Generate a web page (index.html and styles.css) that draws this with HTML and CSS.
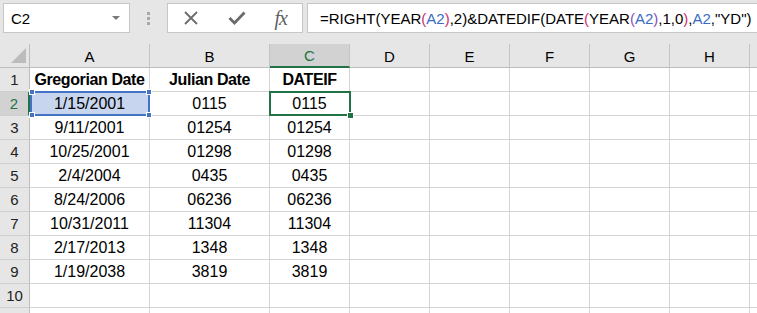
FILE: index.html
```html
<!DOCTYPE html>
<html lang="en">
<head>
  <meta charset="UTF-8">
  <title>Julian Date</title>
  <link rel="stylesheet" href="styles.css">
</head>
<body>
  <div class="window">
    <!-- Name box and formula bar -->
    <div class="formula-row">
      <div class="name-box">
        <span>C2</span>
        <span class="drop"></span>
      </div>
      <div class="grip"><i></i><i></i><i></i></div>
      <div class="fx-buttons">
        <svg class="icon" width="16" height="14" viewBox="0 0 16 14">
          <path d="M2 1 L14 13 M14 1 L2 13" stroke="#6b6b6b" stroke-width="1.8" fill="none"/>
        </svg>
        <svg class="icon" width="18" height="14" viewBox="0 0 18 14">
          <path d="M1.5 7 L6.5 12 L16.5 1.5" stroke="#6b6b6b" stroke-width="2.8" fill="none"/>
        </svg>
        <span class="fx">fx</span>
      </div>
      <div class="formula">=RIGHT(YEAR<span class="p1">(</span><span class="ref">A2</span><span class="p1">)</span>,2)&amp;DATEDIF(DATE<span class="p1">(</span>YEAR<span class="p2">(</span><span class="ref">A2</span><span class="p2">)</span>,1,0<span class="p1">)</span>,<span class="ref">A2</span>,"YD")</div>
    </div>

    <!-- Sheet grid -->
    <div class="sheet">
      <div class="corner"><span class="tri"></span></div>
      <div class="col-head">A</div>
      <div class="col-head">B</div>
      <div class="col-head active">C</div>
      <div class="col-head">D</div>
      <div class="col-head">E</div>
      <div class="col-head">F</div>
      <div class="col-head">G</div>
      <div class="col-head">H</div>
      <div class="col-head"></div>

      <div class="row-head">1</div>
      <div class="cell bold">Gregorian Date</div>
      <div class="cell bold">Julian Date</div>
      <div class="cell bold">DATEIF</div>
      <div class="cell"></div><div class="cell"></div><div class="cell"></div><div class="cell"></div><div class="cell"></div><div class="cell"></div>

      <div class="row-head active">2</div>
      <div class="cell ref-range">1/15/2001<i class="h tl"></i><i class="h tr"></i><i class="h bl"></i><i class="h br"></i></div>
      <div class="cell">0115</div>
      <div class="cell selected">0115<i class="fill-handle"></i></div>
      <div class="cell"></div><div class="cell"></div><div class="cell"></div><div class="cell"></div><div class="cell"></div><div class="cell"></div>

      <div class="row-head">3</div>
      <div class="cell">9/11/2001</div>
      <div class="cell">01254</div>
      <div class="cell">01254</div>
      <div class="cell"></div><div class="cell"></div><div class="cell"></div><div class="cell"></div><div class="cell"></div><div class="cell"></div>

      <div class="row-head">4</div>
      <div class="cell">10/25/2001</div>
      <div class="cell">01298</div>
      <div class="cell">01298</div>
      <div class="cell"></div><div class="cell"></div><div class="cell"></div><div class="cell"></div><div class="cell"></div><div class="cell"></div>

      <div class="row-head">5</div>
      <div class="cell">2/4/2004</div>
      <div class="cell">0435</div>
      <div class="cell">0435</div>
      <div class="cell"></div><div class="cell"></div><div class="cell"></div><div class="cell"></div><div class="cell"></div><div class="cell"></div>

      <div class="row-head">6</div>
      <div class="cell">8/24/2006</div>
      <div class="cell">06236</div>
      <div class="cell">06236</div>
      <div class="cell"></div><div class="cell"></div><div class="cell"></div><div class="cell"></div><div class="cell"></div><div class="cell"></div>

      <div class="row-head">7</div>
      <div class="cell">10/31/2011</div>
      <div class="cell">11304</div>
      <div class="cell">11304</div>
      <div class="cell"></div><div class="cell"></div><div class="cell"></div><div class="cell"></div><div class="cell"></div><div class="cell"></div>

      <div class="row-head">8</div>
      <div class="cell">2/17/2013</div>
      <div class="cell">1348</div>
      <div class="cell">1348</div>
      <div class="cell"></div><div class="cell"></div><div class="cell"></div><div class="cell"></div><div class="cell"></div><div class="cell"></div>

      <div class="row-head">9</div>
      <div class="cell">1/19/2038</div>
      <div class="cell">3819</div>
      <div class="cell">3819</div>
      <div class="cell"></div><div class="cell"></div><div class="cell"></div><div class="cell"></div><div class="cell"></div><div class="cell"></div>

      <div class="row-head">10</div>
      <div class="cell"></div><div class="cell"></div><div class="cell"></div>
      <div class="cell"></div><div class="cell"></div><div class="cell"></div><div class="cell"></div><div class="cell"></div><div class="cell"></div>

      <div class="row-head"></div>
      <div class="cell"></div><div class="cell"></div><div class="cell"></div>
      <div class="cell"></div><div class="cell"></div><div class="cell"></div><div class="cell"></div><div class="cell"></div><div class="cell"></div>
    </div>
  </div>
</body>
</html>
```

FILE: styles.css
```css
body {
  margin: 0;
  padding: 0;
  font-family: "Liberation Sans", Arial, sans-serif;
  background-color: #e6e6e6;
  color: #000;
}

.window {
  width: 757px;
  height: 313px;
  overflow: hidden;
}

/* formula bar */
.formula-row {
  display: flex;
  align-items: center;
  height: 44px;
  padding: 0 0 8px 3px;
  box-sizing: border-box;
}

.name-box,
.fx-buttons,
.formula {
  height: 30px;
  box-sizing: border-box;
  background-color: #fff;
  border: 1px solid #c6c6c6;
  display: flex;
  align-items: center;
}

.name-box {
  width: 127px;
  padding: 0 7px;
  font-size: 15px;
  justify-content: space-between;
}

.drop {
  width: 0;
  height: 0;
  border-left: 4px solid transparent;
  border-right: 4px solid transparent;
  border-top: 4px solid #7a7a7a;
  margin-right: 2px;
}

.grip {
  width: 37px;
  display: flex;
  flex-direction: column;
  align-items: center;
  gap: 2px;
}

.grip i {
  width: 3px;
  height: 3px;
  background-color: #a8a8a8;
}

.fx-buttons {
  width: 136px;
  padding: 0 15px 0 15px;
  justify-content: space-between;
}

.fx {
  font-family: "Liberation Serif", "Times New Roman", serif;
  font-style: italic;
  font-size: 20px;
  color: #5f5f5f;
  letter-spacing: -1px;
}

.formula {
  margin-left: 4px;
  flex: 1;
  padding-left: 12px;
  font-size: 15px;
  white-space: nowrap;
  border-right: none;
}

.ref { color: #3a6cc6; }
.p1 { color: #d0306a; }
.p2 { color: #8a4fc1; }

/* sheet grid */
.sheet {
  display: grid;
  grid-template-columns: 30px 120px 120px 80px 80px 80px 80px 80px 80px 80px;
  grid-auto-rows: 24px;
  background-color: #fff;
}

.corner,
.col-head,
.row-head,
.cell {
  box-sizing: border-box;
  display: flex;
  align-items: center;
  justify-content: center;
  position: relative;
}

.corner {
  background-color: #e6e6e6;
  border-right: 1px solid #bdbdbd;
  border-bottom: 1px solid #bdbdbd;
}

.tri {
  position: absolute;
  right: 3px;
  bottom: 4px;
  width: 0;
  height: 0;
  border-left: 15px solid transparent;
  border-bottom: 15px solid #bcbcbc;
}

.col-head {
  background-color: #e6e6e6;
  border-right: 1px solid #c4c4c4;
  border-bottom: 1px solid #bdbdbd;
  font-size: 15px;
  padding-top: 1px;
}

.col-head.active {
  background-color: #d2d2d2;
  color: #217346;
  border-bottom: 2px solid #217346;
}

.row-head {
  background-color: #e6e6e6;
  border-right: 1px solid #bdbdbd;
  border-bottom: 1px solid #cfcfcf;
  font-size: 15px;
  color: #222;
}

.row-head.active {
  background-color: #d2d2d2;
  color: #217346;
  border-right: 2px solid #217346;
}

.cell {
  border-right: 1px solid #d4d4d4;
  border-bottom: 1px solid #d4d4d4;
  font-size: 16px;
  padding-top: 1px;
}

.cell.bold {
  font-weight: bold;
  letter-spacing: -0.4px;
}

/* A2 reference highlight */
.ref-range {
  background-color: #c8d5ee;
}

.ref-range::after {
  content: "";
  position: absolute;
  top: -1px;
  left: 0;
  right: -1px;
  bottom: -1px;
  border: 2px solid #4472c4;
}

.h {
  position: absolute;
  width: 4px;
  height: 4px;
  background-color: #4472c4;
  border: 1px solid #fff;
  z-index: 2;
}

.h.tl { top: -3px; left: -1px; }
.h.tr { top: -3px; right: -3px; }
.h.bl { bottom: -3px; left: -1px; }
.h.br { bottom: -3px; right: -3px; }

/* active cell C2 */
.selected::after {
  content: "";
  position: absolute;
  top: -1px;
  left: -1px;
  right: -2px;
  bottom: -1px;
  border: 2px solid #217346;
}

.fill-handle {
  position: absolute;
  right: -5px;
  bottom: -4px;
  width: 5px;
  height: 5px;
  background-color: #217346;
  border: 1px solid #fff;
  z-index: 2;
}
```
